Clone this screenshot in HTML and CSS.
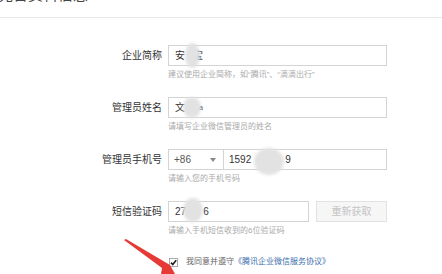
FILE: index.html
```html
<!DOCTYPE html>
<html lang="zh-CN">
<head>
<meta charset="utf-8">
<title>完善资料</title>
<link rel="stylesheet" href="styles.css">
</head>
<body>
<div class="page">
  <div class="header"><div class="title">完善资料信息</div></div>
  <div class="form">
    <div class="row">
      <div class="label">企业简称</div>
      <div class="field">
        <div class="input"><span>安</span><span class="gap g1"></span><span class="tail">宝</span><span class="blob b1"></span></div>
        <div class="hint">建议使用企业简称，如“腾讯”、“滴滴出行”</div>
      </div>
    </div>
    <div class="row">
      <div class="label">管理员姓名</div>
      <div class="field">
        <div class="input"><span>文</span><span class="gap g2"></span><span class="small">a</span><span class="blob b2"></span></div>
        <div class="hint">请填写企业微信管理员的姓名</div>
      </div>
    </div>
    <div class="row">
      <div class="label">管理员手机号</div>
      <div class="field">
        <div class="phone">
          <div class="select"><span class="code">+86</span><span class="caret"></span></div>
          <div class="num"><span>1592</span><span class="gap g3"></span><span>9</span><span class="blob b3"></span></div>
        </div>
        <div class="hint">请输入您的手机号码</div>
      </div>
    </div>
    <div class="row">
      <div class="label">短信验证码</div>
      <div class="field">
        <div class="smsline">
          <div class="input sms"><span>27</span><span class="gap g4"></span><span>6</span><span class="blob b4"></span></div>
          <div class="btn">重新获取</div>
        </div>
        <div class="hint">请输入手机短信收到的6位验证码</div>
      </div>
    </div>
    <div class="agree">
      <span class="check"><svg width="9" height="9" viewBox="0 0 9 9"><path d="M2 4.6 L3.8 6.6 L7.2 2.2" fill="none" stroke="#222" stroke-width="1.6"/></svg></span>
      <span class="agree-text">我同意并遵守</span><span class="link">《腾讯企业微信服务协议》</span>
    </div>
  </div>
  <svg class="arrow" width="442" height="274" viewBox="0 0 442 274">
    <polygon points="124,240 126,239 170,265 175,274 161,274 162,268" fill="#e53a35"/>
  </svg>
</div>
</body>
</html>
```
FILE: styles.css
```css
html, body {
  margin: 0;
  padding: 0;
  background: #fff;
}
body {
  font-family: "Liberation Sans", "Noto Sans CJK SC", sans-serif;
  color: #333;
  overflow: hidden;
}
.page {
  position: relative;
  width: 442px;
  height: 274px;
  overflow: hidden;
}
.header {
  display: flow-root;
  height: 18px;
  box-sizing: border-box;
  border-bottom: 1px solid #e8e8e8;
}
.title {
  font-size: 15px;
  line-height: 15px;
  margin-top: -13px;
  margin-left: -2px;
  color: #444;
}
.form {
  padding-top: 27px;
}
.row {
  display: grid;
  grid-template-columns: 162px 219px;
  column-gap: 6px;
  margin-bottom: 16px;
}
.label {
  font-size: 10px;
  line-height: 21px;
  text-align: right;
  color: #333;
}
.field {
  display: flex;
  flex-direction: column;
}
.input {
  position: relative;
  display: flex;
  align-items: center;
  height: 21px;
  box-sizing: border-box;
  border: 1px solid #d4d4d4;
  padding-left: 6px;
  font-size: 10px;
  line-height: 19px;
  color: #333;
}
.hint {
  margin-top: 3px;
  font-size: 8px;
  line-height: 12px;
  color: #aaa;
}
.phone {
  display: flex;
  height: 21px;
  box-sizing: border-box;
  border: 1px solid #d4d4d4;
  font-size: 10px;
  line-height: 19px;
}
.select {
  width: 55px;
  display: flex;
  align-items: center;
  justify-content: space-between;
  padding: 0 7px 0 5px;
  box-sizing: border-box;
  border-right: 1px solid #d4d4d4;
}
.code {
  color: #555;
}
.caret {
  width: 0;
  height: 0;
  border-left: 3px solid transparent;
  border-right: 3px solid transparent;
  border-top: 4px solid #888;
}
.num {
  position: relative;
  display: flex;
  align-items: center;
  flex: 1;
  padding-left: 5px;
}
.gap {
  display: inline-block;
  height: 19px;
}
.g1 { width: 8px; }
.g2 { width: 14px; }
.g3 { width: 34px; }
.g4 { width: 17px; }
.small {
  font-size: 7px;
}
.smsline {
  display: flex;
  gap: 7px;
}
.sms {
  width: 141px;
}
.btn {
  flex: 1;
  height: 21px;
  box-sizing: border-box;
  border: 1px solid #e2e2e2;
  background: #f6f6f6;
  color: #c4c4c4;
  font-size: 10px;
  line-height: 19px;
  text-align: center;
}
.blob {
  position: absolute;
  background: #e2e2e2;
  border-radius: 50%;
  filter: blur(1.5px);
}
.b1 { left: 16px; top: -3px; width: 15px; height: 25px; }
.b2 { left: 14px; top: -1px; width: 18px; height: 21px; }
.b3 { left: 30px; top: -2px; width: 30px; height: 27px; }
.b4 { left: 14px; top: -4px; width: 20px; height: 24px; }
.agree {
  display: flex;
  align-items: center;
  margin-left: 168px;
  margin-top: 19px;
  font-size: 8px;
  line-height: 12px;
}
.check {
  width: 9px;
  height: 9px;
  box-sizing: border-box;
  border: 1px solid #aaa;
  display: flex;
  margin-right: 8px;
  margin-left: 1px;
}
.check svg {
  margin: -1px;
}
.agree-text {
  color: #666;
}
.link {
  color: #3d6fae;
}
.arrow {
  position: absolute;
  left: 0;
  top: 0;
  pointer-events: none;
}
```
